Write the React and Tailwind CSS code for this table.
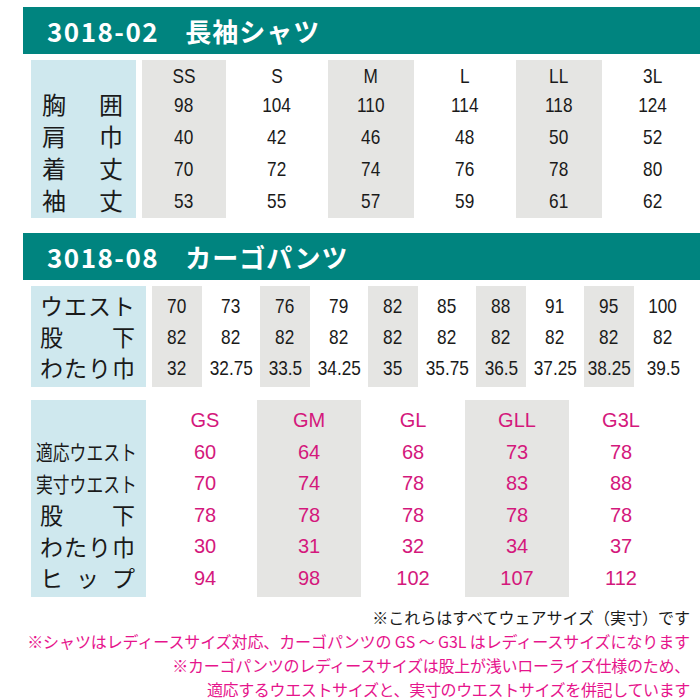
import React from 'react';

const shirt = [
  { size: 'SS', v: ['98', '40', '70', '53'], gray: true },
  { size: 'S', v: ['104', '42', '72', '55'] },
  { size: 'M', v: ['110', '46', '74', '57'], gray: true },
  { size: 'L', v: ['114', '48', '76', '59'] },
  { size: 'LL', v: ['118', '50', '78', '61'], gray: true },
  { size: '3L', v: ['124', '52', '80', '62'] },
];

const pants = [
  ['70', '82', '32'],
  ['73', '82', '32.75'],
  ['76', '82', '33.5'],
  ['79', '82', '34.25'],
  ['82', '82', '35'],
  ['85', '82', '35.75'],
  ['88', '82', '36.5'],
  ['91', '82', '37.25'],
  ['95', '82', '38.25'],
  ['100', '82', '39.5'],
];

const ladies = [
  { size: 'GS', v: ['60', '70', '78', '30', '94'] },
  { size: 'GM', v: ['64', '74', '78', '31', '98'], gray: true },
  { size: 'GL', v: ['68', '78', '78', '32', '102'] },
  { size: 'GLL', v: ['73', '83', '78', '34', '107'], gray: true },
  { size: 'G3L', v: ['78', '88', '78', '37', '112'] },
];

const jp = "font-['Noto_Sans_CJK_JP',sans-serif]";
const arial = "font-['Liberation_Sans',Arial,sans-serif]";

// condensed number, like Arial Narrow
const N = ({ children }) => (
  <span className="inline-block scale-x-[0.82] whitespace-nowrap">{children}</span>
);

const Header = ({ code, name }) => (
  <div className="ml-[23px] h-[47px] bg-[#00847f] flex items-center pl-[24px] text-white font-bold text-[26px] font-['Noto_Sans_CJK_JP',sans-serif] leading-none">
    <span className="tracking-[1.5px]">{code}</span>
    <span className="ml-[26px] tracking-[1px]">{name}</span>
  </div>
);

const Spread = ({ chars, className = '' }) => (
  <div className={`flex justify-between items-center ${className}`}>
    {chars.map((c, i) => (
      <span key={i}>{c}</span>
    ))}
  </div>
);

export default function App() {
  return (
    <div className="w-[700px] h-[700px] bg-white overflow-hidden pt-[7px] text-[#1a1a1a]">
      <Header code="3018-02" name="長袖シャツ" />

      {/* shirt table */}
      <div className="flex mt-[6px]">
        <div className={`ml-[31px] w-[115px] h-[158px] bg-[#cfe8ee] pl-[11px] pr-[13px] pt-[28px] text-[24px] leading-none ${jp}`}>
          {[['胸', '囲'], ['肩', '巾'], ['着', '丈'], ['袖', '丈']].map((r, i) => (
            <Spread key={i} chars={r} className="h-[32px]" />
          ))}
        </div>
        <div className="flex">
          {shirt.map((c, i) => (
            <div key={i} className={`w-[94px] ${i === 0 ? 'pl-[6px] pr-[4px]' : 'px-[4px]'}`}>
              <div className={`h-[158px] text-center text-[21px] leading-none ${arial} ${c.gray ? 'bg-[#e5e5e3]' : ''}`}>
                <div className="h-[28px] flex items-center justify-center pt-[2px]"><N>{c.size}</N></div>
                {c.v.map((v, j) => (
                  <div key={j} className="h-[32px] flex items-center justify-center"><N>{v}</N></div>
                ))}
              </div>
            </div>
          ))}
        </div>
      </div>

      <div className="mt-[15px]">
        <Header code="3018-08" name="カーゴパンツ" />
      </div>

      {/* pants table */}
      <div className="flex mt-[6px]">
        <div className={`ml-[31px] w-[115px] h-[101px] bg-[#cfe8ee] pl-[9px] pr-[11px] pt-[4px] text-[23px] leading-none ${jp}`}>
          <Spread chars={['ウ', 'エ', 'ス', 'ト']} className="h-[31px]" />
          <Spread chars={['股', '下']} className="h-[31px]" />
          <Spread chars={['わ', 'た', 'り', '巾']} className="h-[31px]" />
        </div>
        <div className="flex ml-[6px]">
          {pants.map((c, i) => (
            <div
              key={i}
              className={`h-[101px] pt-[4px] text-center text-[21px] leading-none ${arial} ${i % 2 === 0 ? 'w-[50px] bg-[#e5e5e3]' : 'w-[58px]'}`}
            >
              {c.map((v, j) => (
                <div key={j} className="h-[31px] flex items-center justify-center"><N>{v}</N></div>
              ))}
            </div>
          ))}
        </div>
      </div>

      {/* ladies table */}
      <div className="flex mt-[13px]">
        <div className={`ml-[31px] w-[115px] h-[197px] bg-[#cfe8ee] pl-[9px] pr-[11px] pt-[36px] text-[23px] leading-none ${jp}`}>
          <div className="h-[31.5px] flex items-center -ml-[4px]">
            <span className="inline-block text-[21px] scale-x-[0.8] origin-left whitespace-nowrap">適応ウエスト</span>
          </div>
          <div className="h-[31.5px] flex items-center -ml-[4px]">
            <span className="inline-block text-[21px] scale-x-[0.8] origin-left whitespace-nowrap">実寸ウエスト</span>
          </div>
          <Spread chars={['股', '下']} className="h-[31.5px]" />
          <Spread chars={['わ', 'た', 'り', '巾']} className="h-[31.5px]" />
          <Spread chars={['ヒ', 'ッ', 'プ']} className="h-[31.5px]" />
        </div>
        <div className="flex ml-[7px]">
          {ladies.map((c, i) => (
            <div
              key={i}
              className={`w-[104px] h-[197px] pt-[4px] text-center text-[20px] leading-none text-[#d4187c] ${arial} ${c.gray ? 'bg-[#e5e5e3]' : ''}`}
            >
              <div className="h-[32px] flex items-center justify-center">{c.size}</div>
              {c.v.map((v, j) => (
                <div key={j} className="h-[31.5px] flex items-center justify-center">{v}</div>
              ))}
            </div>
          ))}
        </div>
      </div>

      {/* notes */}
      <div className={`mt-[8px] pr-[10px] text-right text-[16px] leading-[24px] whitespace-nowrap ${jp}`}>
        <div className="text-[#1a1a1a]">※これらはすべてウェアサイズ（実寸）です</div>
        <div className="text-[#e6148c] tracking-[-0.1px]">※シャツはレディースサイズ対応、カーゴパンツの GS ～ G3L はレディースサイズになります</div>
        <div className="text-[#e6148c] tracking-[-0.25px]">※カーゴパンツのレディースサイズは股上が浅いローライズ仕様のため、</div>
        <div className="text-[#e6148c] tracking-[-0.35px]">適応するウエストサイズと、実寸のウエストサイズを併記しています</div>
      </div>
    </div>
  );
}
